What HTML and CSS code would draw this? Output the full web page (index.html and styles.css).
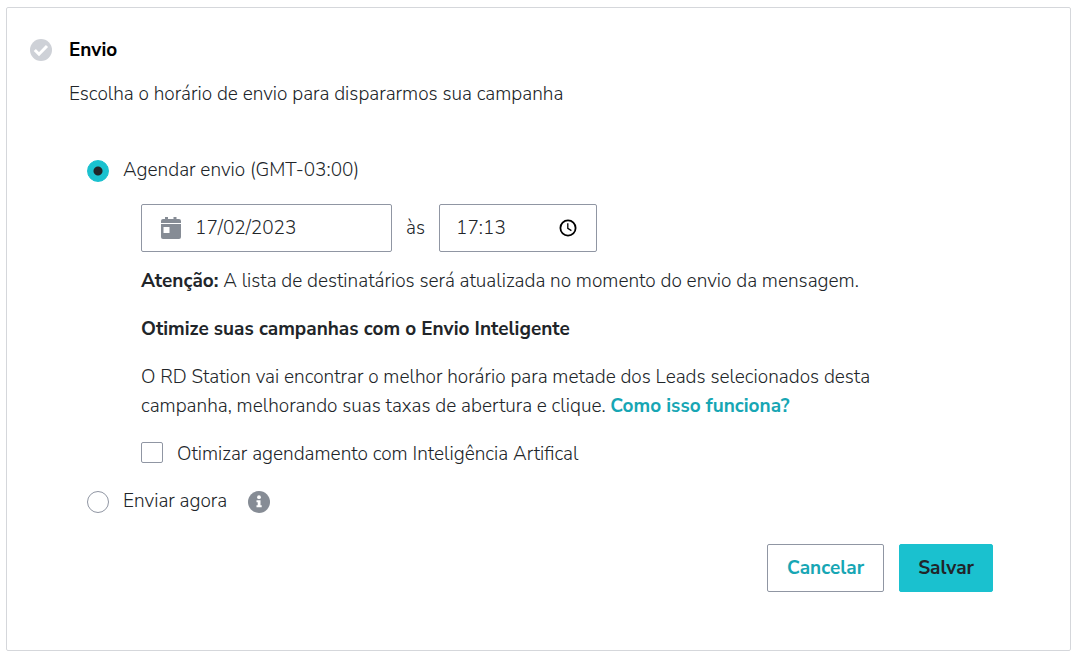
FILE: index.html
```
<!DOCTYPE html>
<html lang="pt-BR">
<head>
  <meta charset="UTF-8" />
  <meta name="viewport" content="width=device-width, initial-scale=1.0" />
  <title>Envio</title>
  <link rel="stylesheet" href="styles.css">
</head>
<body>
  <form class="card">
    <svg class="status" viewBox="0 0 22 22" aria-hidden="true">
      <circle cx="11" cy="11" r="11" fill="#ced1d7" />
      <path d="M4.800 11 L9 15.200 L17 7" fill="none" stroke="#fff" stroke-width="3" />
    </svg>

    <div class="content">
      <h1>Envio</h1>
      <p class="intro">Escolha o horário de envio para dispararmos sua campanha</p>

      <div class="options">
        <div class="option">
          <input type="radio" class="radio" id="schedule" name="sending" checked>
          <label for="schedule">Agendar envio (GMT-03:00)</label>
        </div>

        <div class="details">
          <div class="datetime">
            <div class="field date">
              <svg viewBox="0 0 20 22" width="20" height="22" aria-hidden="true">
                <path d="M4 0h3v2h5.500V0h3v2H18a2 2 0 0 1 2 2v2H0V4a2 2 0 0 1 2-2h2z" fill="#868c95" />
                <path d="M0 7h20v13a2 2 0 0 1-2 2H2a2 2 0 0 1-2-2z" fill="#868c95" />
                <path d="M2.500 10h6v6h-6z" fill="#fff" />
              </svg>
              <input type="text" id="date" value="17/02/2023" aria-label="Data do envio">
            </div>
            <label for="time">às</label>
            <div class="field time">
              <input type="text" id="time" value="17:13">
              <svg viewBox="0 0 18 18" width="18" height="18" fill="none" stroke="#000" aria-hidden="true">
                <circle cx="9" cy="9" r="7.600" stroke-width="1.800" />
                <path d="M8.800 4.200v5.200l3.600 2.200" stroke-width="1.300" />
              </svg>
            </div>
          </div>

          <p class="notice"><strong>Atenção:</strong> A lista de destinatários será atualizada no momento do envio da mensagem.</p>
          <h2>Otimize suas campanhas com o Envio Inteligente</h2>
          <p class="about">O RD Station vai encontrar o melhor horário para metade dos Leads selecionados desta campanha, melhorando suas taxas de abertura e clique. <a href="#">Como isso funciona?</a></p>

          <div class="check">
            <input type="checkbox" class="checkbox" id="optimize">
            <label for="optimize">Otimizar agendamento com Inteligência Artifical</label>
          </div>
        </div>

        <div class="option">
          <input type="radio" class="radio" id="now" name="sending">
          <label for="now">Enviar agora</label>
          <svg class="info" viewBox="0 0 22 22" aria-hidden="true">
            <circle cx="11" cy="11" r="11" fill="#868c95" />
            <circle cx="11" cy="6.200" r="1.900" fill="#fff" />
            <path d="M8.500 9.200h4v5h1.200v2.100H8.500v-2.100h1.200v-2.900H8.500z" fill="#fff" />
          </svg>
        </div>
      </div>

      <div class="actions">
        <button type="button" class="btn cancel">Cancelar</button>
        <button type="submit" class="btn save">Salvar</button>
      </div>
    </div>
  </form>
</body>
</html>
```

FILE: styles.css
```
* {
  box-sizing: border-box;
}

body {
  margin: 7px 11px 10px 6px;
  background: #fff;
  color: #212529;
  font-family: "Nunito Sans", "Open Sans", sans-serif;
  font-size: 19px;
  font-weight: 300;
  line-height: 29px;
}

h1, h2, p {
  margin: 0;
  font-size: 19px;
}

h1, h2, strong, a, .btn {
  font-weight: 700;
}

h1 {
  color: #000;
}

a {
  color: #17a6b4;
  text-decoration: none;
}

.card {
  display: flex;
  gap: 17px;
  padding: 28px 77px 58px 23px;
  border: 1px solid #d5d7db;
  border-radius: 2px;
}

.status {
  flex: none;
  width: 22px;
  height: 22px;
  margin-top: 3px;
}

.content {
  flex: 1;
}

.intro {
  margin-top: 15px;
}

.options {
  margin-top: 47px;
  padding-left: 18px;
}

.option {
  display: flex;
  align-items: center;
  gap: 14px;
}

.radio, .checkbox {
  appearance: none;
  width: 22px;
  height: 22px;
  margin: 0;
  border: 1px solid #9096a3;
  background: #fff;
}

.radio {
  border-radius: 50%;
}

.radio:checked {
  border-color: #1ac1cf;
  background: radial-gradient(circle, #212529 4px, #1ac1cf 5px);
}

.checkbox {
  height: 21px;
  margin-top: 2px;
  border-radius: 2px;
}

.details {
  max-width: 806px;
  padding: 19px 0 18px 54px;
}

.datetime {
  display: flex;
  align-items: center;
  gap: 14px;
}

.field {
  display: flex;
  align-items: center;
  height: 48px;
  border: 1px solid #9096a3;
  border-radius: 2px;
}

.field input {
  flex: 1;
  min-width: 0;
  padding: 0;
  border: 0;
  outline: 0;
  background: none;
  color: inherit;
  font: inherit;
}

.date {
  gap: 14px;
  width: 251px;
  padding: 0 19px;
}

.time {
  width: 158px;
  padding: 0 19px 0 16px;
}

.notice {
  margin-top: 15px;
}

h2, .about {
  margin-top: 19px;
}

.check {
  display: flex;
  align-items: flex-start;
  gap: 14px;
  margin-top: 19px;
}

.info {
  width: 22px;
  height: 22px;
  margin-left: 7px;
}

.actions {
  display: flex;
  justify-content: flex-end;
  gap: 15px;
  margin-top: 28px;
}

.btn {
  height: 48px;
  padding: 0 19px;
  border: 1px solid #9096a3;
  border-radius: 2px;
  background: #fff;
  color: #17a6b4;
  font-family: inherit;
  font-size: 19px;
  cursor: pointer;
}

.save {
  padding: 0 18px;
  border-color: #1ac1cf;
  background: #1ac1cf;
  color: #212529;
}
```
